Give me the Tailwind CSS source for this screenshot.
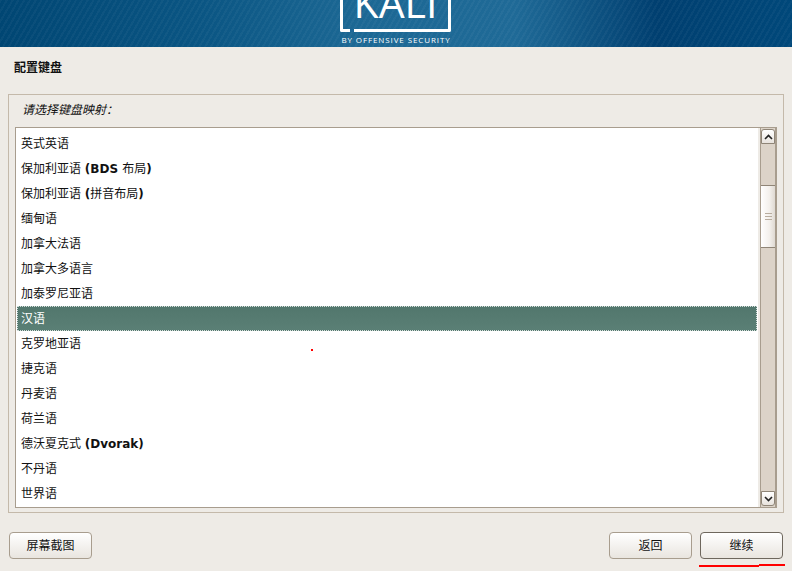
<!DOCTYPE html>
<html lang="zh-CN">
<head>
    <meta charset="UTF-8">
    <title>配置键盘</title>
    <script src="https://cdn.jsdelivr.net/npm/@tailwindcss/browser@4"></script>
</head>
<body class="relative w-[792px] h-[571px] overflow-hidden bg-[#eeebe6] text-[12px] leading-none text-[#111] font-['DejaVu_Sans','Noto_Sans_CJK_SC',sans-serif]">
    <!-- banner -->
    <header class="relative h-[47px] overflow-hidden bg-[linear-gradient(90deg,#004673_0%,#0a5583_25%,#1c6894_45%,#1f6a97_65%,#003f70_83%,#00487a_100%)]">
        <div class="absolute inset-0 bg-[repeating-linear-gradient(120deg,rgba(255,255,255,0.035)_0px,rgba(255,255,255,0.035)_2px,transparent_2px,transparent_5px)]"></div>
        <div class="relative flex h-full flex-col items-center justify-end pb-[3px] text-white">
            <div class="relative mr-px flex h-[60px] w-[111px] shrink-0 items-end justify-center rounded-b-[2px] border-x-[3px] border-b-[3px] border-white pb-[10px]">
                <span class="font-['Open_Sans',sans-serif] text-[41px] leading-[34px]">KALI</span>
                <span class="absolute bottom-[-3px] left-[7px] h-[3px] w-[4px] bg-[#1c6796]"></span>
            </div>
            <span class="mt-[4px] whitespace-nowrap font-['Open_Sans',sans-serif] text-[8px] font-medium leading-[8px] tracking-[0.9px]">BY OFFENSIVE SECURITY</span>
        </div>
    </header>

    <main class="flex h-[524px] flex-col px-[8px]">
        <h1 class="mt-[15px] ml-[6px] h-[32px] text-[12px] leading-[13px] font-bold">配置键盘</h1>

        <!-- frame -->
        <section class="flex h-[419px] w-[776px] flex-col border border-[#c4b9aa]">
            <p class="h-[32px] pl-[13px] pt-[9px] text-[12px] italic leading-[13px]">请选择键盘映射：</p>

            <div class="mx-[6px] flex h-[381px] w-[762px] border border-[#a89d8e] bg-[#eeebe6]">
                <ul class="h-full w-[742px] bg-white pt-[3px]">
                    <li class="flex h-[25px] items-center pl-[5px] pt-px">英式英语</li>
                    <li class="flex h-[25px] items-center whitespace-pre pl-[5px] pt-px">保加利亚语 <b>(BDS </b>布局<b>)</b></li>
                    <li class="flex h-[25px] items-center whitespace-pre pl-[5px] pt-px">保加利亚语 <b>(</b>拼音布局<b>)</b></li>
                    <li class="flex h-[25px] items-center pl-[5px] pt-px">缅甸语</li>
                    <li class="flex h-[25px] items-center pl-[5px] pt-px">加拿大法语</li>
                    <li class="flex h-[25px] items-center pl-[5px] pt-px">加拿大多语言</li>
                    <li class="flex h-[25px] items-center pl-[5px] pt-px">加泰罗尼亚语</li>
                    <li class="mx-px flex h-[25px] items-center border border-dotted border-[#d5dedb] bg-[linear-gradient(180deg,#52776d,#5a7f75)] pl-[3px] text-white">汉语</li>
                    <li class="flex h-[25px] items-center pl-[5px] pt-px">克罗地亚语</li>
                    <li class="flex h-[25px] items-center pl-[5px] pt-px">捷克语</li>
                    <li class="flex h-[25px] items-center pl-[5px] pt-px">丹麦语</li>
                    <li class="flex h-[25px] items-center pl-[5px] pt-px">荷兰语</li>
                    <li class="flex h-[25px] items-center whitespace-pre pl-[5px] pt-px">德沃夏克式 <b>(Dvorak)</b></li>
                    <li class="flex h-[25px] items-center pl-[5px] pt-px">不丹语</li>
                    <li class="flex h-[25px] items-center pl-[5px] pt-px">世界语</li>
                </ul>

                <!-- scrollbar -->
                <div class="ml-[2px] flex w-[16px] flex-col border-x border-[#a89d8e] bg-[#dcd3c8] py-px">
                    <div class="flex h-[15px] items-center justify-center rounded-t-[3px] border border-[#8f8577] bg-[linear-gradient(180deg,#ffffff,#e8e3dd)]">
                        <svg width="9" height="6" viewBox="0 0 9 6" fill="none" stroke="#222" stroke-width="1.6"><path d="M1 5l3.5-3.5L8 5"/></svg>
                    </div>
                    <div class="mt-[41px] flex h-[63px] flex-col items-center justify-center gap-[2px] border-y border-[#8f8577] bg-[linear-gradient(90deg,#ffffff,#f3f0ec_60%,#dfd9d2)]">
                        <span class="h-px w-[7px] bg-[#b8ad9f]"></span>
                        <span class="h-px w-[7px] bg-[#b8ad9f]"></span>
                        <span class="h-px w-[7px] bg-[#b8ad9f]"></span>
                    </div>
                    <div class="flex-1"></div>
                    <div class="flex h-[15px] items-center justify-center rounded-b-[3px] border border-[#8f8577] bg-[linear-gradient(180deg,#ffffff,#e8e3dd)]">
                        <svg width="9" height="6" viewBox="0 0 9 6" fill="none" stroke="#222" stroke-width="1.6"><path d="M1 1l3.5 3.5L8 1"/></svg>
                    </div>
                </div>
            </div>
        </section>

        <!-- buttons -->
        <div class="mt-[19px] flex items-start pl-px">
            <button class="h-[27px] w-[83px] rounded-[4px] border border-[#a89d8e] bg-[linear-gradient(180deg,#ffffff,#e9e5df)] pt-px">屏幕截图</button>
            <button class="ml-auto h-[27px] w-[83px] rounded-[4px] border border-[#a89d8e] bg-[linear-gradient(180deg,#ffffff,#e9e5df)] pt-px">返回</button>
            <button class="ml-[8px] mr-px h-[27px] w-[83px] rounded-[4px] border border-[#6e675d] bg-[linear-gradient(180deg,#ffffff,#e9e5df)] pt-px">继续</button>
        </div>
    </main>

    <!-- red annotation marks -->
    <span class="absolute left-[311px] top-[349px] h-[2px] w-[2px] bg-[#f00]"></span>
    <span class="absolute left-[699px] top-[565px] h-[2px] w-[60px] bg-[#f00]"></span>
    <span class="absolute left-[759px] top-[564px] h-[2px] w-[26px] bg-[#f00]"></span>
</body>
</html>
